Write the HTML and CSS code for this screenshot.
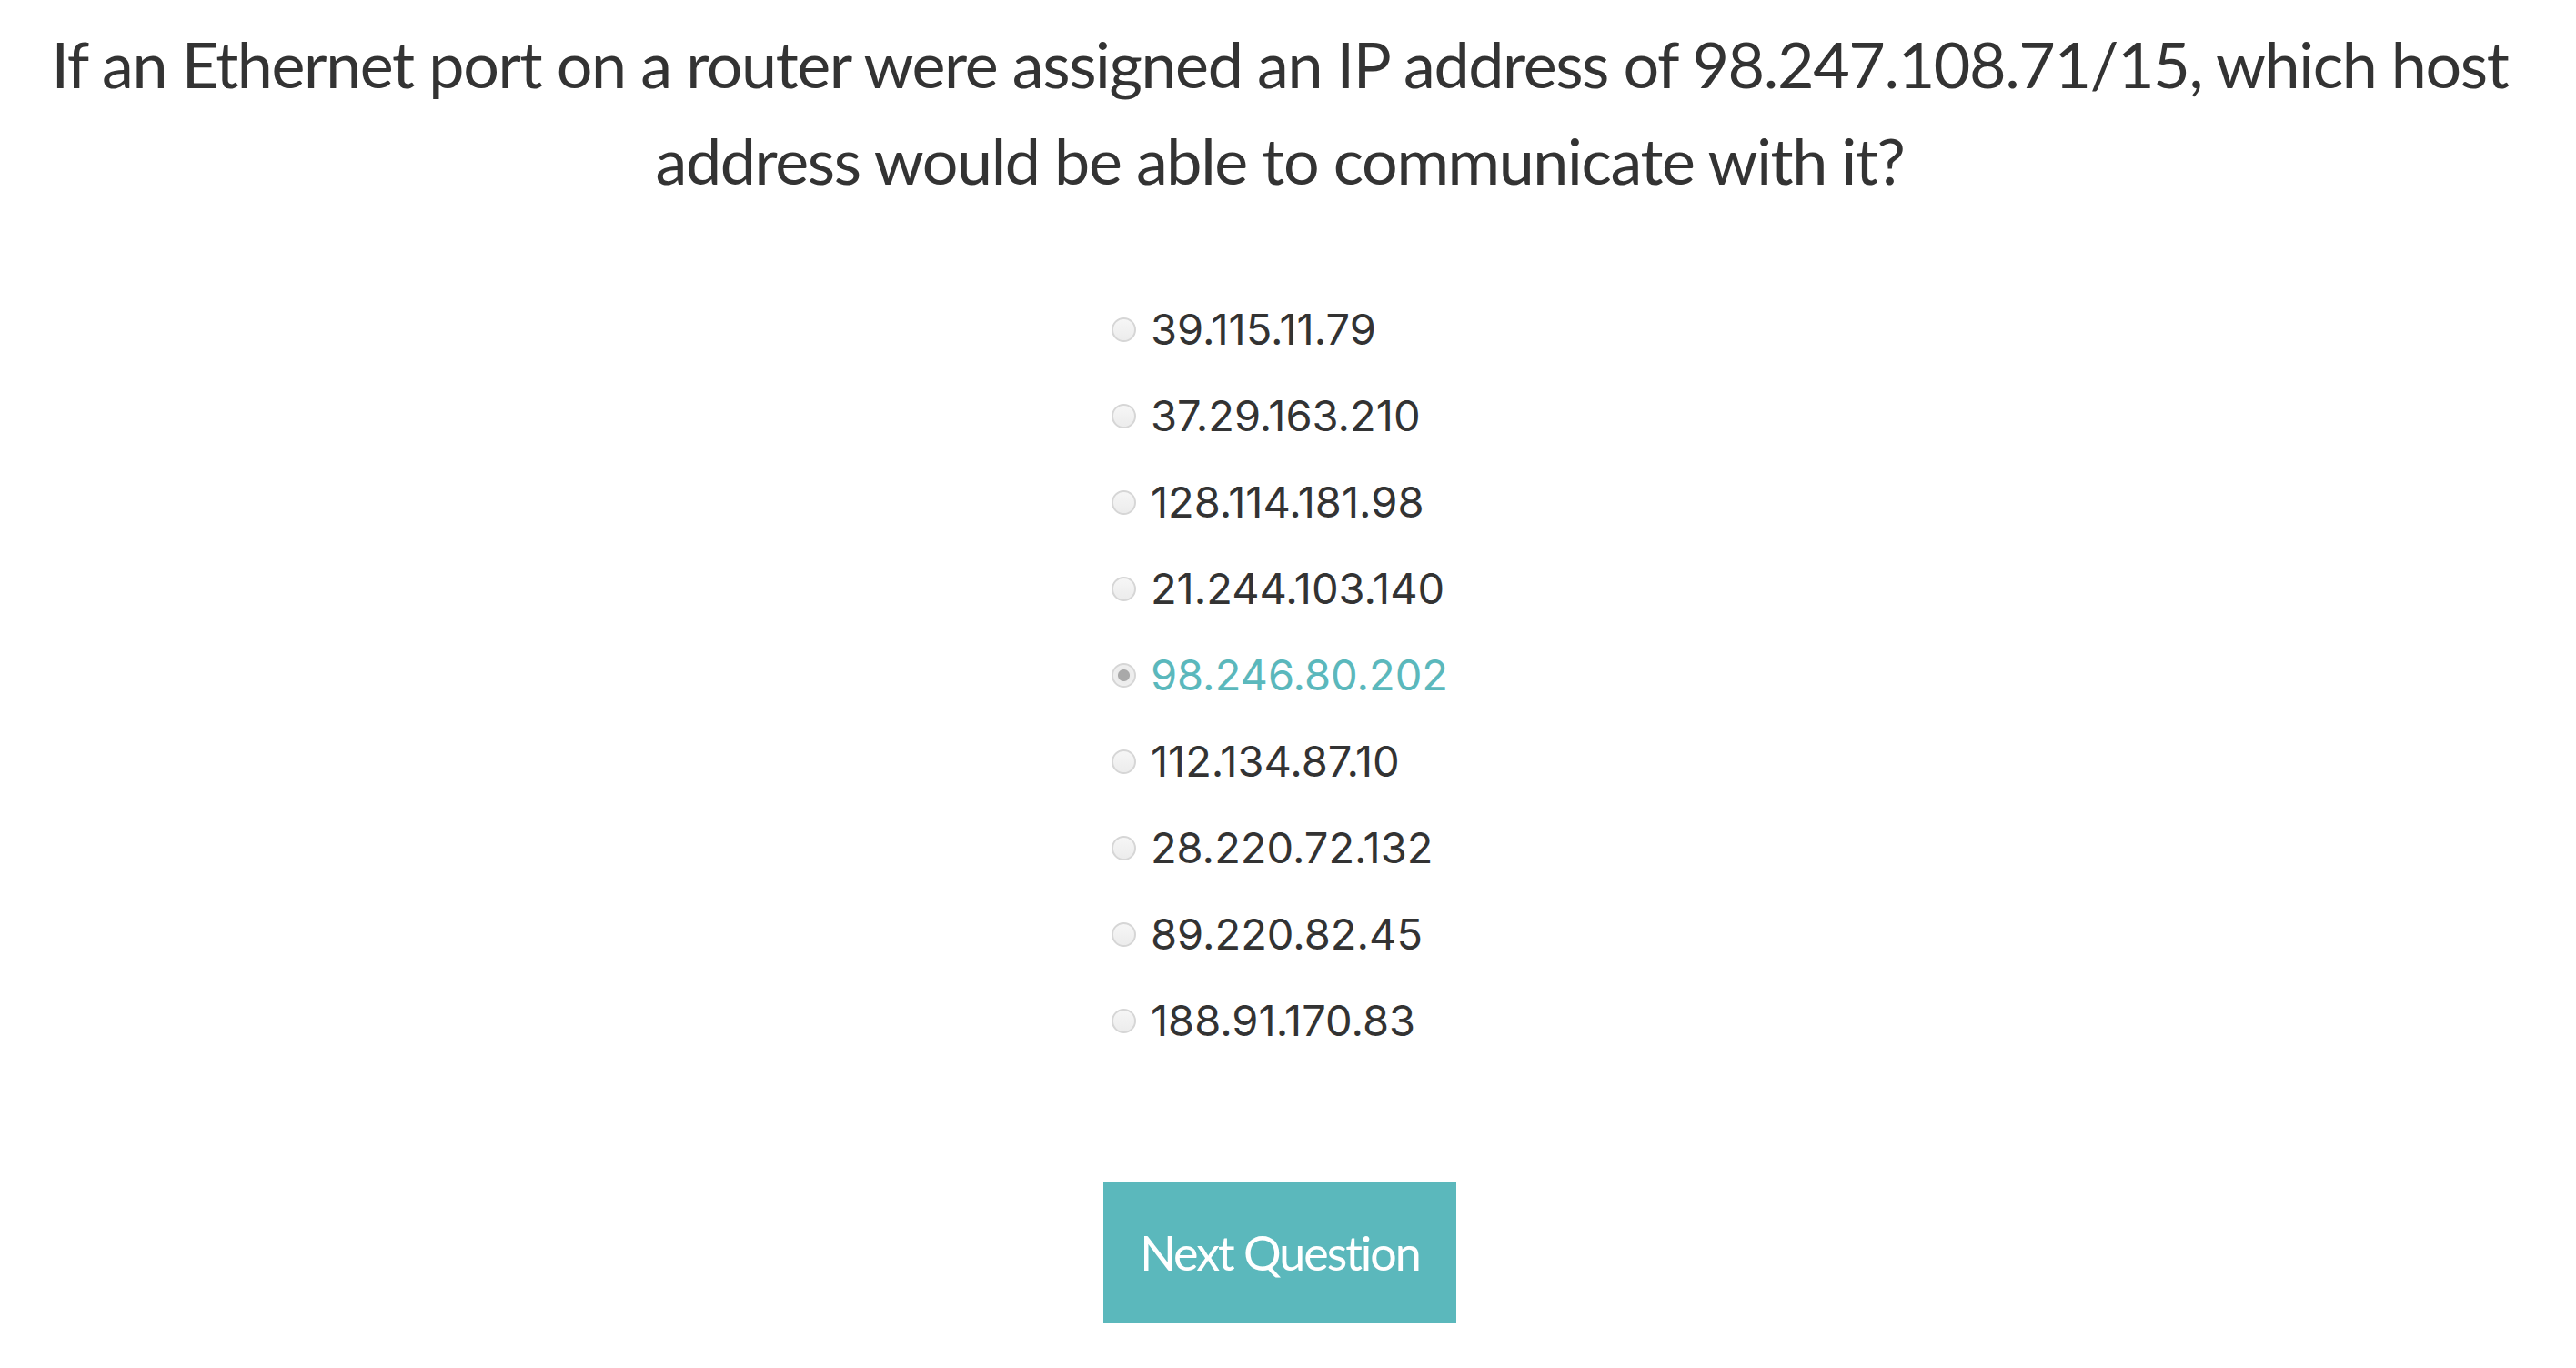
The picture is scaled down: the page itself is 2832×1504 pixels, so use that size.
FILE: index.html
```html
<!DOCTYPE html>
<html>
<head>
<meta charset="utf-8">
<title>Quiz</title>
<link rel="stylesheet" href="styles.css">
</head>
<body>
<main class="page">
  <h1 class="question">If an Ethernet port on a router were assigned an IP address of 98.247.108.71/15, which host address would be able to communicate with it?</h1>
  <form class="answers">
    <div class="options">
      <label class="option"><input type="radio" name="a" class="radio"><span class="option-text">39.115.11.79</span></label>
      <label class="option"><input type="radio" name="a" class="radio"><span class="option-text">37.29.163.210</span></label>
      <label class="option"><input type="radio" name="a" class="radio"><span class="option-text">128.114.181.98</span></label>
      <label class="option"><input type="radio" name="a" class="radio"><span class="option-text">21.244.103.140</span></label>
      <label class="option option-selected"><input type="radio" name="a" class="radio" checked><span class="option-text">98.246.80.202</span></label>
      <label class="option"><input type="radio" name="a" class="radio"><span class="option-text">112.134.87.10</span></label>
      <label class="option"><input type="radio" name="a" class="radio"><span class="option-text">28.220.72.132</span></label>
      <label class="option"><input type="radio" name="a" class="radio"><span class="option-text">89.220.82.45</span></label>
      <label class="option"><input type="radio" name="a" class="radio"><span class="option-text">188.91.170.83</span></label>
    </div>
    <button type="button" class="next-btn">Next Question</button>
  </form>
</main>
</body>
</html>
```
FILE: styles.css
```css
html, body {
  margin: 0;
  padding: 0;
  background: #ffffff;
}

.page {
  margin-right: 18px;
  display: flex;
  flex-direction: column;
  align-items: center;
  color: #333333;
}

.question {
  margin: 17px 0 0 0;
  font-family: "Lato", "Liberation Sans", Arial, sans-serif;
  font-weight: normal;
  font-size: 70px;
  letter-spacing: -1.4px;
  line-height: 106px;
  text-align: center;
  color: #333333;
}

.answers {
  margin-top: 85px;
  display: flex;
  flex-direction: column;
  align-items: center;
}

.options {
  display: flex;
  flex-direction: column;
  align-items: flex-start;
}

.option {
  display: flex;
  align-items: center;
  height: 95px;
  gap: 16px;
  cursor: pointer;
}

.radio {
  appearance: none;
  -webkit-appearance: none;
  margin: 0;
  width: 27px;
  height: 27px;
  box-sizing: border-box;
  border: 2px solid #d6d6d6;
  border-radius: 50%;
  background: linear-gradient(#f6f6f6, #ececec);
  position: relative;
  top: 1px;
}

.radio:checked {
  background: radial-gradient(circle, #a9a9a9 0, #a9a9a9 6px, #ececec 7px, #f2f2f2 100%);
}

.option-text {
  font-family: "Inter", "Liberation Sans", Arial, sans-serif;
  font-size: 47px;
  line-height: 95px;
  color: #333333;
}

.option-selected .option-text {
  color: #5bb8bc;
}

.next-btn {
  margin-top: 131px;
  height: 154px;
  width: 388px;
  padding: 0;
  border: none;
  border-radius: 0;
  background: #5bb8bc;
  color: #ffffff;
  font-family: "Lato", "Liberation Sans", Arial, sans-serif;
  font-size: 52px;
  letter-spacing: -2px;
  line-height: 150px;
  cursor: pointer;
}
```
